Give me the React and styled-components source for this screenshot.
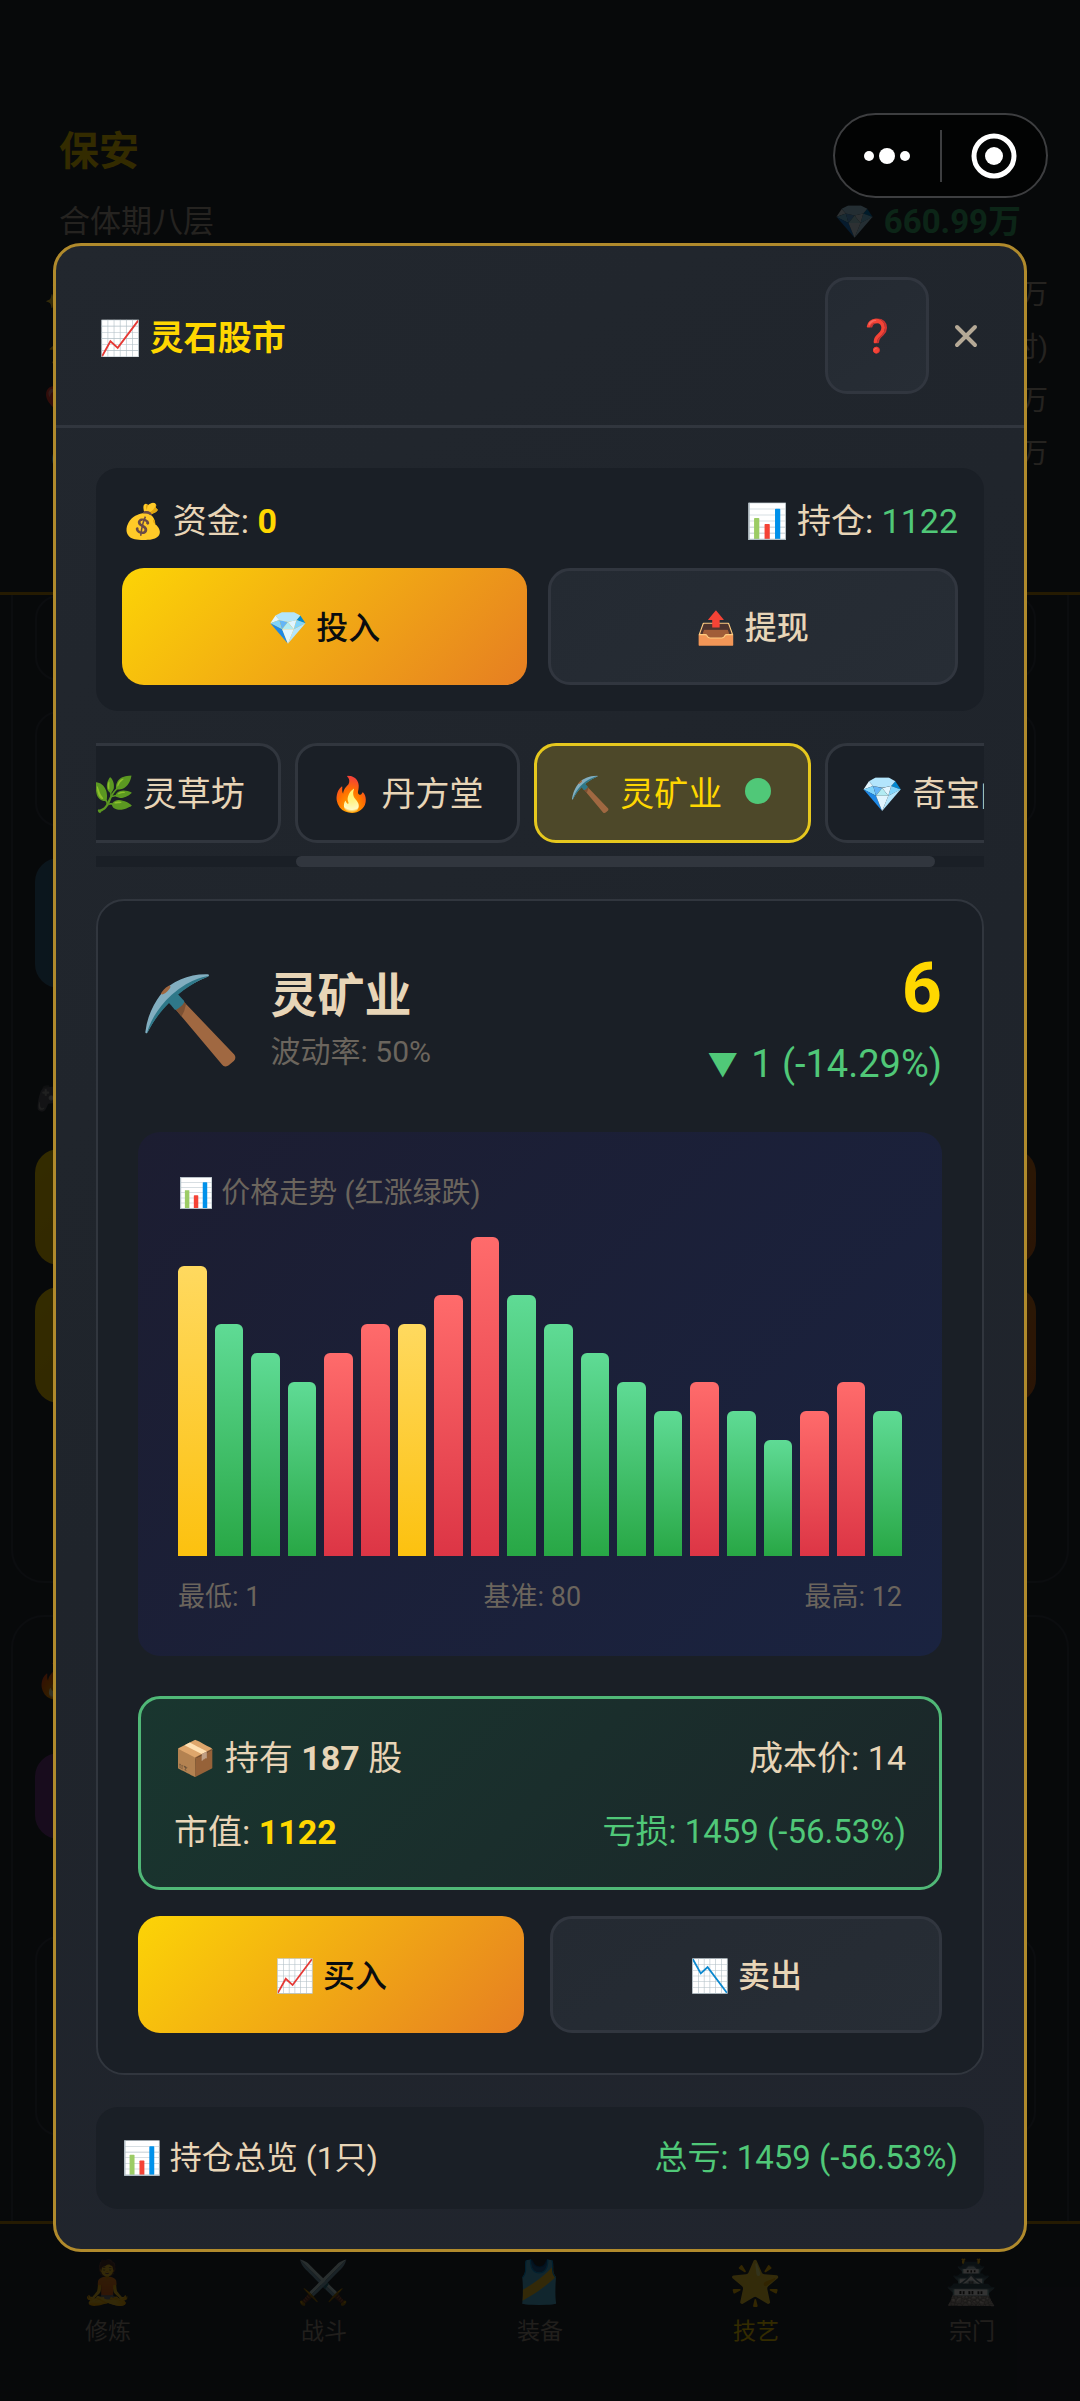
import React, { useLayoutEffect, useRef } from "react";
import styled, { createGlobalStyle, css } from "styled-components";

const GlobalStyle = createGlobalStyle`
  *, *::before, *::after { box-sizing: border-box; }
  body {
    margin: 0;
    background: #262d36;
    color: #e8d5b7;
    font-family: Roboto, "Noto Sans CJK SC", "Noto Color Emoji", sans-serif;
    font-size: 34px;
  }
  button { font-family: inherit; margin: 0; cursor: pointer; }
  h1, h2, h3, p { margin: 0; font-size: inherit; font-weight: inherit; }
`;

const Page = styled.div`
  position: relative;
  min-height: 100vh;
  display: flex;
  flex-direction: column;
`;

/* ---------- game screen behind the dialog ---------- */

const Profile = styled.header`
  padding: 122px 32px 112px 44px;
  border-bottom: 3px solid #b8860b;
`;
const ProfileRow = styled.div`
  display: flex;
  justify-content: space-between;
  padding: 0 27px 0 15px;
  line-height: ${(p) => (p.$tall ? 60 : 48)}px;
  margin-bottom: ${(p) => (p.$tall ? 16 : 22)}px;
`;
const PlayerName = styled.h1`
  font-size: 40px;
  font-weight: 700;
  color: #ffd700;
`;
const Realm = styled.span`
  font-size: 31px;
  color: #b8ae9e;
`;
const Stones = styled.span`
  font-size: 33px;
  font-weight: 700;
  color: #3cba74;
`;
const StatRow = styled.div`
  display: flex;
  justify-content: space-between;
  font-size: 28px;
  line-height: 53px;
  color: #b8ae9e;
`;

const Main = styled.main`
  flex: 1 1 0;
  overflow: hidden;
  display: flex;
  flex-direction: column;
  gap: 32px;
  padding: 0 11px;
`;
const Section = styled.section`
  flex: none;
  display: flex;
  flex-direction: column;
  height: ${(p) => p.$height}px;
  padding: 0 31px 0 22px;
  border: 2px solid #39414b;
  border-top-width: ${(p) => (p.$open ? 0 : 2)}px;
  border-radius: ${(p) => (p.$open ? "0 0 33px 33px" : "33px 33px 0 0")};
`;
const SectionTitle = styled.h2`
  font-size: 34px;
  line-height: 60px;
  margin: ${(p) => p.$space};
`;
const Slab = styled.div`
  flex: none;
  height: ${(p) => p.$height}px;
  margin-bottom: ${(p) => p.$after}px;
  border-radius: 24px;
  ${(p) =>
    ({
      plain: css`border: 2px solid #39414b;`,
      blue: css`background: linear-gradient(90deg, #3b7090, #262d36 90%);`,
      gold: css`background: linear-gradient(135deg, #ffd700, #d2691e);`,
      purple: css`background: linear-gradient(90deg, #7a3f92, #262d36 90%);`,
    })[p.$tone]}
`;

const TabBar = styled.nav`
  display: grid;
  grid-template-columns: repeat(5, 1fr);
  height: 180px;
  padding-top: 28px;
  border-top: 3px solid #b8860b;
`;
const TabLink = styled.a`
  display: flex;
  flex-direction: column;
  align-items: center;
  text-decoration: none;
  color: ${(p) => (p.$active ? "#ffd700" : "#a3998b")};
  font-size: 23px;
  line-height: 36px;
`;
const TabIcon = styled.span`
  font-size: 42px;
  line-height: 62px;
`;

/* ---------- mini program capsule ---------- */

const Capsule = styled.div`
  position: absolute;
  z-index: 3;
  top: 113px;
  right: 32px;
  width: 215px;
  height: 85px;
  display: flex;
  align-items: center;
  border: 2px solid #3d3e40;
  border-radius: 43px;
  background: #020303;
`;
const CapsuleButton = styled.button`
  flex: 1;
  height: 52px;
  padding: 0;
  display: grid;
  place-items: center;
  background: none;
  border: 0;
  & + & { border-left: 2px solid #3d3e40; }
`;

/* ---------- dialog ---------- */

const Overlay = styled.div`
  position: absolute;
  z-index: 2;
  inset: 0;
  padding: 243px 53px 0;
  background: rgba(0, 0, 0, 0.8);
`;
const Dialog = styled.section`
  border: 3px solid #b08a2c;
  border-radius: 28px;
  background: linear-gradient(145deg, #22272e, #1f242b 50%, #21252e);
  overflow: hidden;
`;
const DialogHead = styled.header`
  display: flex;
  align-items: center;
  padding: 31px 36px 31px 43px;
  border-bottom: 3px solid #31363e;
`;
const DialogTitle = styled.h2`
  flex: 1;
  font-size: 34px;
  font-weight: 700;
  color: #ffd700;
`;
const buttonFace = css`
  height: 117px;
  border-radius: 22px;
  font-size: 32px;
  font-weight: 500;
`;
const darkFace = css`
  color: #e8d5b7;
  background: linear-gradient(145deg, #242a32, #272d35);
  border: 3px solid #31363f;
`;
const HelpButton = styled.button`
  ${buttonFace}
  ${darkFace}
  width: 104px;
  padding: 0;
`;
const CloseButton = styled.button`
  display: grid;
  place-items: center;
  width: 44px;
  height: 44px;
  margin-left: 15px;
  padding: 0;
  background: none;
  border: 0;
`;
const DialogBody = styled.div`
  display: flex;
  flex-direction: column;
  gap: 32px;
  padding: 40px;
`;
const Between = styled.div`
  display: flex;
  justify-content: space-between;
  align-items: center;
`;
const Panel = styled.section`
  padding: 26px;
  border-radius: 22px;
  background: #1a1f26;
`;
const FundsRow = styled(Between)`
  line-height: 54px;
  margin-bottom: 20px;
`;
const ButtonRow = styled.div`
  display: flex;
  gap: ${(p) => p.$gap}px;
`;
const Action = styled.button`
  ${buttonFace}
  flex: 1 1 0;
  padding: 0 20px 4px;
  ${(p) =>
    p.$primary
      ? css`color: #0a0c0f; border: 0; background: linear-gradient(135deg, #fcd406, #e67e22);`
      : darkFace}
`;
const Gold = styled.strong`
  font-weight: 700;
  color: #ffd700;
`;
const Green = styled.span`
  color: #50c878;
`;

const StockTabs = styled.div`
  display: flex;
  gap: 14px;
  overflow: hidden;
`;
const StockTab = styled.button`
  flex: none;
  display: flex;
  align-items: center;
  height: 100px;
  padding: 0 33px 4px;
  font-size: 34px;
  white-space: pre;
  border-radius: 22px;
  color: ${(p) => (p.$active ? "#ffd700" : "#e8d5b7")};
  background: ${(p) => (p.$active ? "#4d4829" : "#1a1f26")};
  border: 3px solid ${(p) => (p.$active ? "#e6c81e" : "#31363e")};
`;
const HeldDot = styled.span`
  width: 26px;
  height: 26px;
  margin: 0 4px 0 23px;
  border-radius: 50%;
  background: #50c878;
`;
const ScrollTrack = styled.div`
  height: 11px;
  margin-top: 13px;
  background: #1a1f26;
`;
const ScrollThumb = styled.div`
  width: 72%;
  height: 100%;
  margin-left: 22.5%;
  border-radius: 6px;
  background: #31363e;
`;

const StockCard = styled.section`
  padding: 40px;
  border: 2px solid #31363e;
  border-radius: 28px;
  background: #1a1f26;
`;
const StockHead = styled(Between)`
  height: 151px;
  padding-top: 8px;
  margin-bottom: 40px;
`;
const Identity = styled.div`
  display: flex;
  align-items: center;
  gap: 28px;
`;
const StockIcon = styled.span`
  font-size: 84px;
  line-height: 110px;
`;
const StockName = styled.h3`
  font-size: 47px;
  font-weight: 700;
  line-height: 62px;
`;
const Muted = styled.p`
  font-size: ${(p) => p.$size}px;
  line-height: 50px;
  color: #6b655d;
`;
const Quote = styled.div`
  text-align: right;
`;
const Price = styled.p`
  font-size: 70px;
  font-weight: 700;
  line-height: 88px;
  color: #ffd700;
`;
const Change = styled.p`
  font-size: 38px;
  line-height: 64px;
  color: #50c878;
`;
const Arrow = styled.span`
  font-size: 30px;
  vertical-align: 2px;
  margin-right: 4px;
`;

const Chart = styled.div`
  padding: 36px 40px 34px;
  border-radius: 22px;
  background: linear-gradient(135deg, #1c1d31, #1a2340);
`;
const Bars = styled.div`
  display: flex;
  align-items: flex-end;
  gap: 8px;
  height: 319px;
  margin: 19px 0 16px;
`;
const barTones = {
  flat: "#ffd95f, #fcc10f",
  up: "#ff6b6b, #dc3545",
  down: "#5fdb95, #28a745",
};
const Bar = styled.div`
  flex: 1 1 0;
  border-radius: 6px 6px 0 0;
  background: linear-gradient(180deg, ${(p) => barTones[p.$tone]});
`;

const Holding = styled.div`
  margin: 40px 0 26px;
  padding: 22px 33px 18px;
  border: 3px solid #50b877;
  border-radius: 22px;
  font-size: 34px;
  line-height: 74px;
  background: linear-gradient(135deg, #19362f, #1b2629);
`;
const Loss = styled(Green)`
  font-size: 33px;
`;
const Summary = styled(Panel)`
  font-size: 33px;
  line-height: 50px;
`;
const SummaryLabel = styled.span`
  font-size: 32px;
`;

const prices = [11, 9, 8, 7, 8, 9, 9, 10, 12, 10, 9, 8, 7, 6, 7, 6, 5, 6, 7, 6];
const lowest = 1;
const highest = 12;
const toneAt = (i) => {
  if (i === 0 || prices[i] === prices[i - 1]) return "flat";
  return prices[i] > prices[i - 1] ? "up" : "down";
};

const stocks = [
  { icon: "🌿", name: "灵草坊" },
  { icon: "🔥", name: "丹方堂" },
  { icon: "⛏️", name: "灵矿业", active: true },
  { icon: "💎", name: "奇宝阁" },
];

const stats = [
  ["✨", "万"],
  ["⚡", "时)"],
  ["❤️", "万"],
  ["💧", "万"],
];

const tabs = [
  ["🧘", "修炼"],
  ["⚔️", "战斗"],
  ["🎽", "装备"],
  ["🌟", "技艺"],
  ["🏯", "宗门"],
];

function GameScreen() {
  return (
    <>
      <Profile>
        <ProfileRow $tall>
          <PlayerName>保安</PlayerName>
        </ProfileRow>
        <ProfileRow>
          <Realm>合体期八层</Realm>
          <Stones>💎 660.99万</Stones>
        </ProfileRow>
        {stats.map(([icon, unit]) => (
          <StatRow key={icon}>
            <span>{icon}</span>
            <span>{unit}</span>
          </StatRow>
        ))}
      </Profile>
      <Main>
        <Section $open $height={988}>
          <Slab $tone="plain" $height={86} $after={30} />
          <Slab $tone="plain" $height={116} $after={31} />
          <Slab $tone="blue" $height={130} $after={80} />
          <SectionTitle $space="0 0 21px">🎮</SectionTitle>
          <Slab $tone="gold" $height={116} $after={22} />
          <Slab $tone="gold" $height={116} $after={0} />
        </Section>
        <Section $height={700}>
          <SectionTitle $space="34px 0 42px">🔥</SectionTitle>
          <Slab $tone="purple" $height={86} $after={97} />
          <Slab $tone="plain" $height={200} $after={0} />
        </Section>
      </Main>
      <TabBar>
        {tabs.map(([icon, label]) => (
          <TabLink key={label} href="#" $active={label === "技艺"}>
            <TabIcon>{icon}</TabIcon>
            {label}
          </TabLink>
        ))}
      </TabBar>
    </>
  );
}

function StockPicker() {
  const strip = useRef(null);
  useLayoutEffect(() => {
    strip.current.scrollLeft = 40;
  }, []);
  return (
    <div>
      <StockTabs ref={strip}>
        {stocks.map((s) => (
          <StockTab key={s.name} type="button" $active={s.active}>
            {s.icon} {s.name}
            {s.active && <HeldDot />}
          </StockTab>
        ))}
      </StockTabs>
      <ScrollTrack>
        <ScrollThumb />
      </ScrollTrack>
    </div>
  );
}

export default function App() {
  return (
    <Page>
      <GlobalStyle />
      <GameScreen />
      <Capsule>
        <CapsuleButton type="button" aria-label="更多">
          <svg width="48" height="18" viewBox="0 0 48 18" fill="#fff">
            <circle cx="6" cy="9" r="5" />
            <circle cx="24" cy="9" r="8" />
            <circle cx="42" cy="9" r="5" />
          </svg>
        </CapsuleButton>
        <CapsuleButton type="button" aria-label="关闭小程序">
          <svg width="46" height="46" viewBox="0 0 46 46" fill="none">
            <circle cx="23" cy="23" r="20" stroke="#fff" strokeWidth="5" />
            <circle cx="23" cy="23" r="9" fill="#fff" />
          </svg>
        </CapsuleButton>
      </Capsule>
      <Overlay>
        <Dialog role="dialog" aria-label="灵石股市">
          <DialogHead>
            <DialogTitle>📈 灵石股市</DialogTitle>
            <HelpButton type="button">❓</HelpButton>
            <CloseButton type="button" aria-label="关闭">
              <svg width="26" height="26" viewBox="0 0 26 26" stroke="#b5a996" strokeWidth="4" strokeLinecap="round">
                <path d="M4 4l18 18M22 4L4 22" />
              </svg>
            </CloseButton>
          </DialogHead>
          <DialogBody>
            <Panel>
              <FundsRow>
                <span>💰 资金: <Gold>0</Gold></span>
                <span>📊 持仓: <Green>1122</Green></span>
              </FundsRow>
              <ButtonRow $gap={21}>
                <Action type="button" $primary>💎 投入</Action>
                <Action type="button">📤 提现</Action>
              </ButtonRow>
            </Panel>
            <StockPicker />
            <StockCard>
              <StockHead>
                <Identity>
                  <StockIcon>⛏️</StockIcon>
                  <div>
                    <StockName>灵矿业</StockName>
                    <Muted $size={30}>波动率: 50%</Muted>
                  </div>
                </Identity>
                <Quote>
                  <Price>6</Price>
                  <Change><Arrow>▼</Arrow> 1 (-14.29%)</Change>
                </Quote>
              </StockHead>
              <Chart>
                <Muted $size={29}>📊 价格走势 (红涨绿跌)</Muted>
                <Bars>
                  {prices.map((v, i) => (
                    <Bar
                      key={i}
                      $tone={toneAt(i)}
                      style={{ height: `${((v - lowest) / (highest - lowest)) * 100}%` }}
                    />
                  ))}
                </Bars>
                <Between>
                  <Muted $size={27}>最低: 1</Muted>
                  <Muted $size={27}>基准: 80</Muted>
                  <Muted $size={27}>最高: 12</Muted>
                </Between>
              </Chart>
              <Holding>
                <Between>
                  <span>📦 持有 <strong>187</strong> 股</span>
                  <span>成本价: 14</span>
                </Between>
                <Between>
                  <span>市值: <Gold>1122</Gold></span>
                  <Loss>亏损: 1459 (-56.53%)</Loss>
                </Between>
              </Holding>
              <ButtonRow $gap={26}>
                <Action type="button" $primary>📈 买入</Action>
                <Action type="button">📉 卖出</Action>
              </ButtonRow>
            </StockCard>
            <Summary>
              <Between>
                <SummaryLabel>📊 持仓总览 (1只)</SummaryLabel>
                <Green>总亏: 1459 (-56.53%)</Green>
              </Between>
            </Summary>
          </DialogBody>
        </Dialog>
      </Overlay>
    </Page>
  );
}
